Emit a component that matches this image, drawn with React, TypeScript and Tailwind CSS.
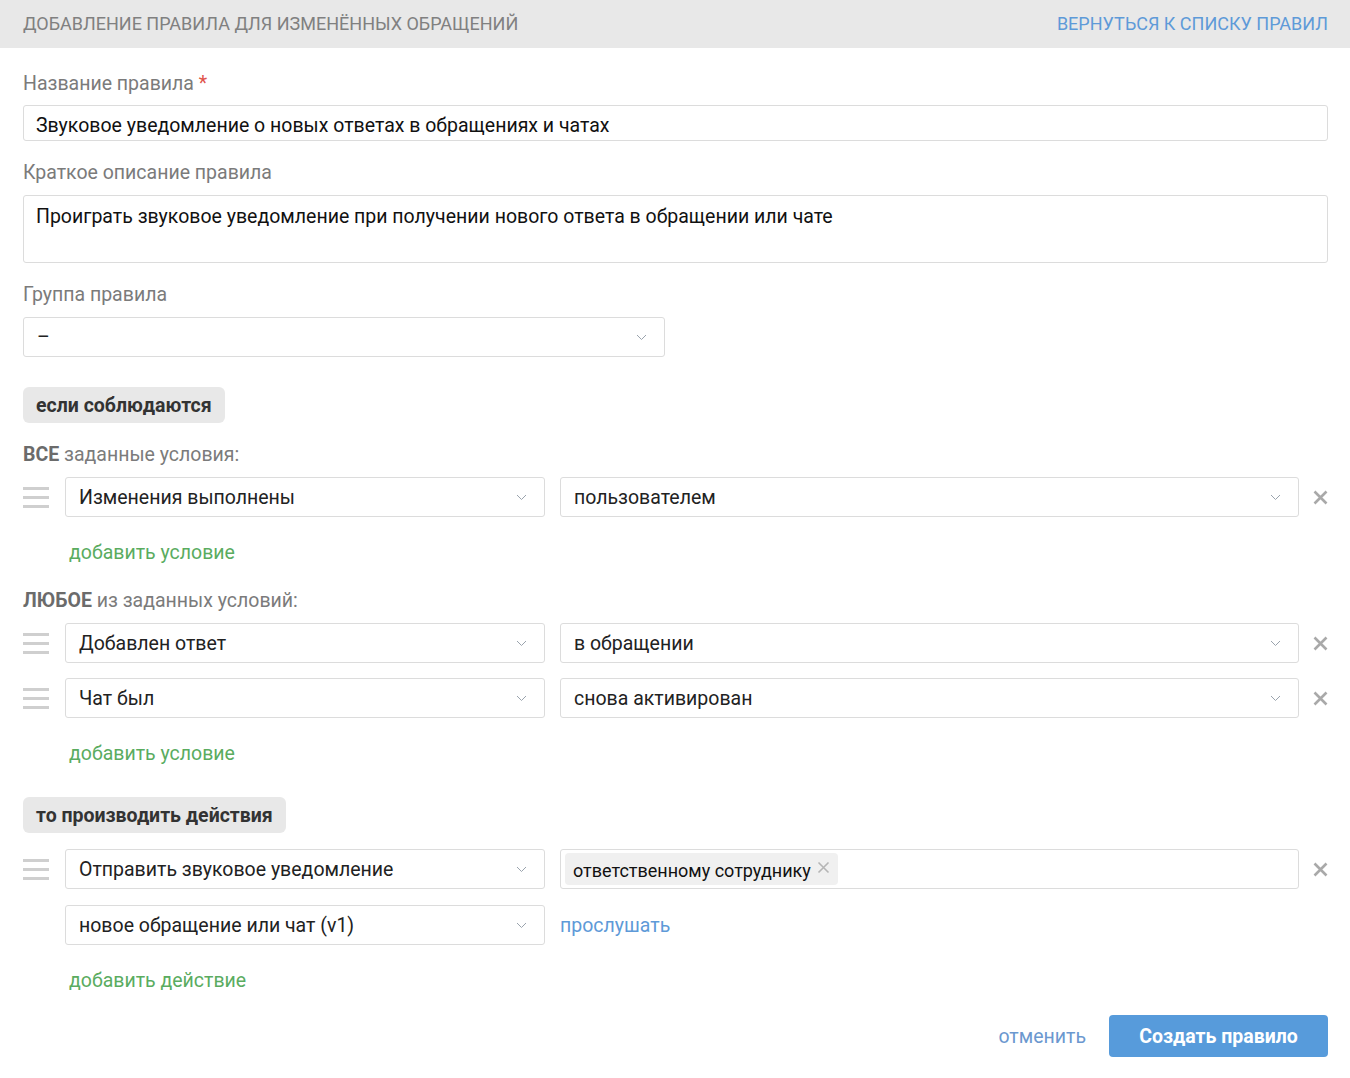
import React from "react";

const font = { fontFamily: "Roboto, 'Noto Sans', Arial, sans-serif" };

function Chevron() {
  return (
    <svg width="11" height="7" viewBox="0 0 11 7" className="shrink-0">
      <path d="M1 1 L5.5 5.5 L10 1" fill="none" stroke="#9aa3ad" strokeWidth="1" />
    </svg>
  );
}

function RemoveX() {
  return (
    <button className="w-[29px] flex justify-end shrink-0">
      <svg width="15" height="15" viewBox="0 0 15 15">
        <path d="M1.5 1.5 L13.5 13.5 M13.5 1.5 L1.5 13.5" stroke="#a9a9a9" strokeWidth="2.6" strokeLinecap="butt" />
      </svg>
    </button>
  );
}

function Handle() {
  return (
    <div className="w-[42px] shrink-0 flex flex-col gap-[6px] pt-[1px]">
      <div className="w-[26px] h-[3px] bg-[#cfcfcf]" />
      <div className="w-[26px] h-[3px] bg-[#cfcfcf]" />
      <div className="w-[26px] h-[3px] bg-[#cfcfcf]" />
    </div>
  );
}

function Select({ value, className = "" }: { value: string; className?: string }) {
  return (
    <div
      className={`h-10 border border-[#dcdcdc] rounded-[3px] bg-white flex items-center justify-between pl-[13px] pr-[17px] text-[19.5px] leading-[24px] text-[#222] ${className}`}
    >
      <span className="pt-[2px]">{value}</span>
      <Chevron />
    </div>
  );
}

function Row({ left, right }: { left: string; right: React.ReactNode }) {
  return (
    <div className="flex items-center">
      <Handle />
      <Select value={left} className="w-[480px] shrink-0" />
      <div className="ml-[15px] flex-1">
        {typeof right === "string" ? <Select value={right} /> : right}
      </div>
      <RemoveX />
    </div>
  );
}

function Pill({ children }: { children: React.ReactNode }) {
  return (
    <div className="inline-flex h-9 items-center pt-[2px] px-[13px] bg-[#e8e8e8] rounded-[6px] text-[19.5px] leading-[24px] font-bold text-[#333]">
      {children}
    </div>
  );
}

function Label({ children, className = "" }: { children: React.ReactNode; className?: string }) {
  return <div className={`text-[19.5px] leading-[22px] text-[#7b7b7b] ${className}`}>{children}</div>;
}

function AddLink({ children, className = "" }: { children: React.ReactNode; className?: string }) {
  return (
    <div className={`pl-[46px] pt-[1px] text-[19.5px] leading-[22px] text-[#5aac5f] ${className}`}>{children}</div>
  );
}

export default function App() {
  return (
    <div style={font} className="w-[1350px] min-h-[1078px] bg-white">
      <div className="h-12 bg-[#e8e8e8] flex items-center justify-between pl-[23px] pr-[22px]">
        <span className="text-[18px] uppercase text-[#808080] -mt-[1px]">Добавление правила для изменённых обращений</span>
        <span className="text-[18px] uppercase text-[#5e9ad8] -mt-[1px]">Вернуться к списку правил</span>
      </div>

      <div className="pl-[23px] pr-[22px]">
        <Label className="mt-[25px]">
          Название правила <span className="text-[#e0524a]">*</span>
        </Label>
        <div className="mt-[10px] h-9 border border-[#dcdcdc] rounded-[3px] flex items-center px-3 pt-[5px] text-[19.5px] leading-[24px] text-[#111]">
          Звуковое уведомление о новых ответах в обращениях и чатах
        </div>

        <Label className="mt-[21px]">Краткое описание правила</Label>
        <div className="mt-[11px] h-[68px] border border-[#dcdcdc] rounded-[3px] px-3 pt-[10px] text-[19.5px] leading-[22px] text-[#111]">
          Проиграть звуковое уведомление при получении нового ответа в обращении или чате
        </div>

        <Label className="mt-[21px]">Группа правила</Label>
        <Select value="–" className="mt-[11px] w-[642px]" />

        <div className="mt-[30px]">
          <Pill>если соблюдаются</Pill>
        </div>

        <Label className="mt-[21px]">
          <b className="text-[#6b6b6b]">ВСЕ</b> заданные условия:
        </Label>
        <div className="mt-[11px]">
          <Row left="Изменения выполнены" right="пользователем" />
        </div>
        <AddLink className="mt-6">добавить условие</AddLink>

        <Label className="mt-[26px]">
          <b className="text-[#6b6b6b]">ЛЮБОЕ</b> из заданных условий:
        </Label>
        <div className="mt-[11px] flex flex-col gap-[15px]">
          <Row left="Добавлен ответ" right="в обращении" />
          <Row left="Чат был" right="снова активирован" />
        </div>
        <AddLink className="mt-6">добавить условие</AddLink>

        <div className="mt-[32px]">
          <Pill>то производить действия</Pill>
        </div>

        <div className="mt-4 flex flex-col gap-4">
          <Row
            left="Отправить звуковое уведомление"
            right={
              <div className="h-10 border border-[#dcdcdc] rounded-[3px] flex items-center px-[4px]">
                <div className="h-8 bg-[#f0f0f0] rounded-[4px] flex items-center pt-[3px] pl-[8px] pr-[8px] text-[18px] leading-[22px] text-[#111]">
                  ответственному сотруднику
                  <svg width="13" height="13" viewBox="0 0 13 13" className="ml-[6px] -mt-[6px]">
                    <path d="M1.5 1.5 L11.5 11.5 M11.5 1.5 L1.5 11.5" stroke="#b5b5b5" strokeWidth="1.6" />
                  </svg>
                </div>
              </div>
            }
          />
          <div className="flex items-center">
            <div className="w-[42px] shrink-0" />
            <Select value="новое обращение или чат (v1)" className="w-[480px] shrink-0" />
            <span className="ml-[15px] pt-[2px] text-[19.5px] text-[#5e9ad8]">прослушать</span>
          </div>
        </div>
        <AddLink className="mt-6">добавить действие</AddLink>

        <div className="mt-[23px] flex justify-end items-center">
          <span className="text-[19.5px] text-[#6b98cf] mr-[23px] pt-[2px]">отменить</span>
          <button className="h-[42px] w-[219px] rounded-[4px] bg-[#579bdb] text-white font-bold text-[19.5px] pt-[2px]">
            Создать правило
          </button>
        </div>
      </div>
    </div>
  );
}
